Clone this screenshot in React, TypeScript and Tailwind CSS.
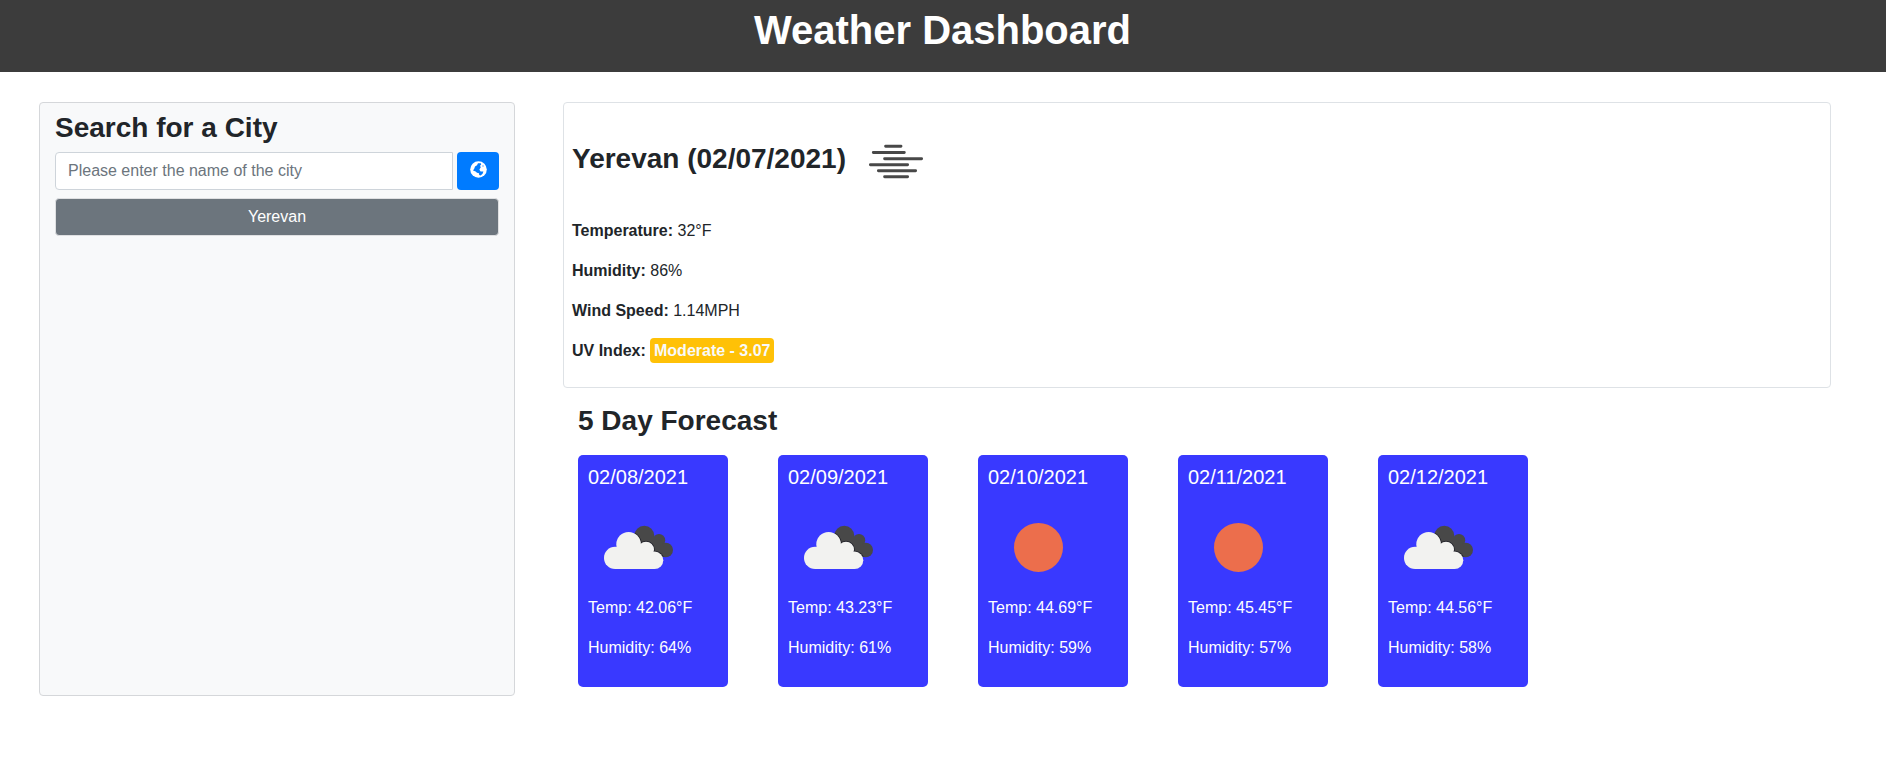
import React from "react";

type Sky = "clouds" | "clear";

const forecast: { date: string; sky: Sky; temp: string; humidity: number }[] = [
  { date: "02/08/2021", sky: "clouds", temp: "42.06", humidity: 64 },
  { date: "02/09/2021", sky: "clouds", temp: "43.23", humidity: 61 },
  { date: "02/10/2021", sky: "clear", temp: "44.69", humidity: 59 },
  { date: "02/11/2021", sky: "clear", temp: "45.45", humidity: 57 },
  { date: "02/12/2021", sky: "clouds", temp: "44.56", humidity: 58 },
];

function GlobeIcon() {
  return (
    <svg width="17" height="17" viewBox="0 0 17 17">
      <circle cx="8.5" cy="8.5" r="8.3" fill="#fff" />
      <path
        fill="#007bff"
        d="M8 2.2L10.8 2.2L11.2 3.6L10 4.8L10.8 6.2L10 7.6L9.4 8.8L10.6 10.4L13.4 10.6L12.6 12.8L10.6 14.4L9.2 14L9 12.2L7 11.8L5.6 10.6L3 9.6L4.2 7.8L5 5.4L7 4.2Z"
      />
      <path fill="#007bff" d="M12.4 4.4h1.2v1.2h-1.2z" />
    </svg>
  );
}

function MistIcon() {
  return (
    <svg
      className="mt-[5px] ml-1"
      width="100"
      height="100"
      viewBox="0 0 100 100"
      stroke="#484848"
      strokeWidth="2.9"
      strokeLinecap="round"
    >
      <path d="M35.6 33.3h15.4M23.3 39.5h31M34.6 45.8h37M20.4 51.7h37.2M28.4 57.7h37.2M34.6 63.7h23" />
    </svg>
  );
}

function WhiteCloud() {
  return (
    <>
      <circle cx="27.1" cy="60.9" r="11.1" />
      <circle cx="40.6" cy="47.3" r="12.3" />
      <circle cx="58" cy="52.7" r="8" />
      <circle cx="66.6" cy="63.3" r="8.7" />
      <path d="M28.3 50L60 55L66.6 63V72H27V60Z" />
    </>
  );
}

function DarkCloud() {
  return (
    <>
      <circle cx="56.3" cy="38.7" r="10" />
      <circle cx="71" cy="43.2" r="6.2" />
      <circle cx="77.7" cy="53" r="7.3" />
      <path d="M52 40L70 40L78 54L76 60L60 55Z" />
    </>
  );
}

function CloudsIcon({ id }: { id: string }) {
  return (
    <svg width="100" height="100" viewBox="0 0 100 100">
      <clipPath id={id}>
        <DarkCloud />
      </clipPath>
      <g fill="#484848">
        <DarkCloud />
      </g>
      <g clipPath={`url(#${id})`} fill="#23232b" stroke="#23232b" strokeWidth="1.8">
        <WhiteCloud />
      </g>
      <g fill="#f2f2f0">
        <WhiteCloud />
      </g>
    </svg>
  );
}

function SunIcon() {
  return (
    <svg width="100" height="100" viewBox="0 0 100 100">
      <circle cx="50.5" cy="50.4" r="24.5" fill="#ec6e4c" />
    </svg>
  );
}

function Reading({ label, children }: { label: string; children: React.ReactNode }) {
  return (
    <p className="mb-4 h-6">
      <strong>{label}:</strong> {children}
    </p>
  );
}

export default function App() {
  return (
    <div className="min-h-[781px] bg-white font-['Liberation_Sans',Arial,sans-serif] text-base leading-6 text-[#212529]">
      <header className="h-[72px] bg-[#3c3c3c] pt-1.5 pr-px text-center">
        <h1 className="text-[40px] leading-[48px] font-bold text-white">Weather Dashboard</h1>
      </header>
      <div className="flex items-start pt-[30px] pl-[39px]">
        <aside className="h-[594px] w-[476px] rounded border border-[#d5d7da] bg-[#f8f9fa] px-[15px] pt-2">
          <h2 className="mb-2 text-[28px] leading-[33px] font-bold">Search for a City</h2>
          <div className="flex gap-1">
            <input
              className="h-[38px] w-[398px] rounded-l border border-[#ced4da] bg-white px-3 placeholder:text-[#6c757d]"
              placeholder="Please enter the name of the city"
            />
            <button className="flex h-[38px] w-[42px] items-center justify-center rounded bg-[#007bff] pb-1">
              <GlobeIcon />
            </button>
          </div>
          <button className="mt-2 h-[38px] w-[444px] rounded border border-[#dfe0e2] bg-[#6c757d] text-white">Yerevan</button>
        </aside>
        <main className="ml-12 w-[1268px]">
          <section className="h-[286px] rounded border border-[#dee2e6] px-2">
            <div className="mb-px flex h-[115px] items-center">
              <h2 className="mb-1 text-[28px] leading-[34px] font-bold">Yerevan (02/07/2021)</h2>
              <MistIcon />
            </div>
            <Reading label="Temperature">32°F</Reading>
            <Reading label="Humidity">86%</Reading>
            <Reading label="Wind Speed">1.14MPH</Reading>
            <Reading label="UV Index">
              <span className="-mt-px inline-block h-[25px] w-[124px] rounded bg-[#ffc107] text-center leading-[26px] font-bold whitespace-nowrap text-[#f8f9fa]">
                Moderate - 3.07
              </span>
            </Reading>
          </section>
          <section className="pl-[15px]">
            <h2 className="mt-4 text-[28px] leading-[34px] font-bold">5 Day Forecast</h2>
            <div className="mt-[17px] flex gap-[50px]">
              {forecast.map((day) => (
                <article key={day.date} className="h-[232px] w-[150px] rounded-[5px] bg-[#3939ff] px-2.5 pt-2.5 text-white">
                  <h5 className="mb-2 text-xl leading-6">{day.date}</h5>
                  <div className="h-[99px]">{day.sky === "clouds" ? <CloudsIcon id={`shade-${day.humidity}`} /> : <SunIcon />}</div>
                  <p className="mb-4">Temp: {day.temp}°F</p>
                  <p>Humidity: {day.humidity}%</p>
                </article>
              ))}
            </div>
          </section>
        </main>
      </div>
    </div>
  );
}
